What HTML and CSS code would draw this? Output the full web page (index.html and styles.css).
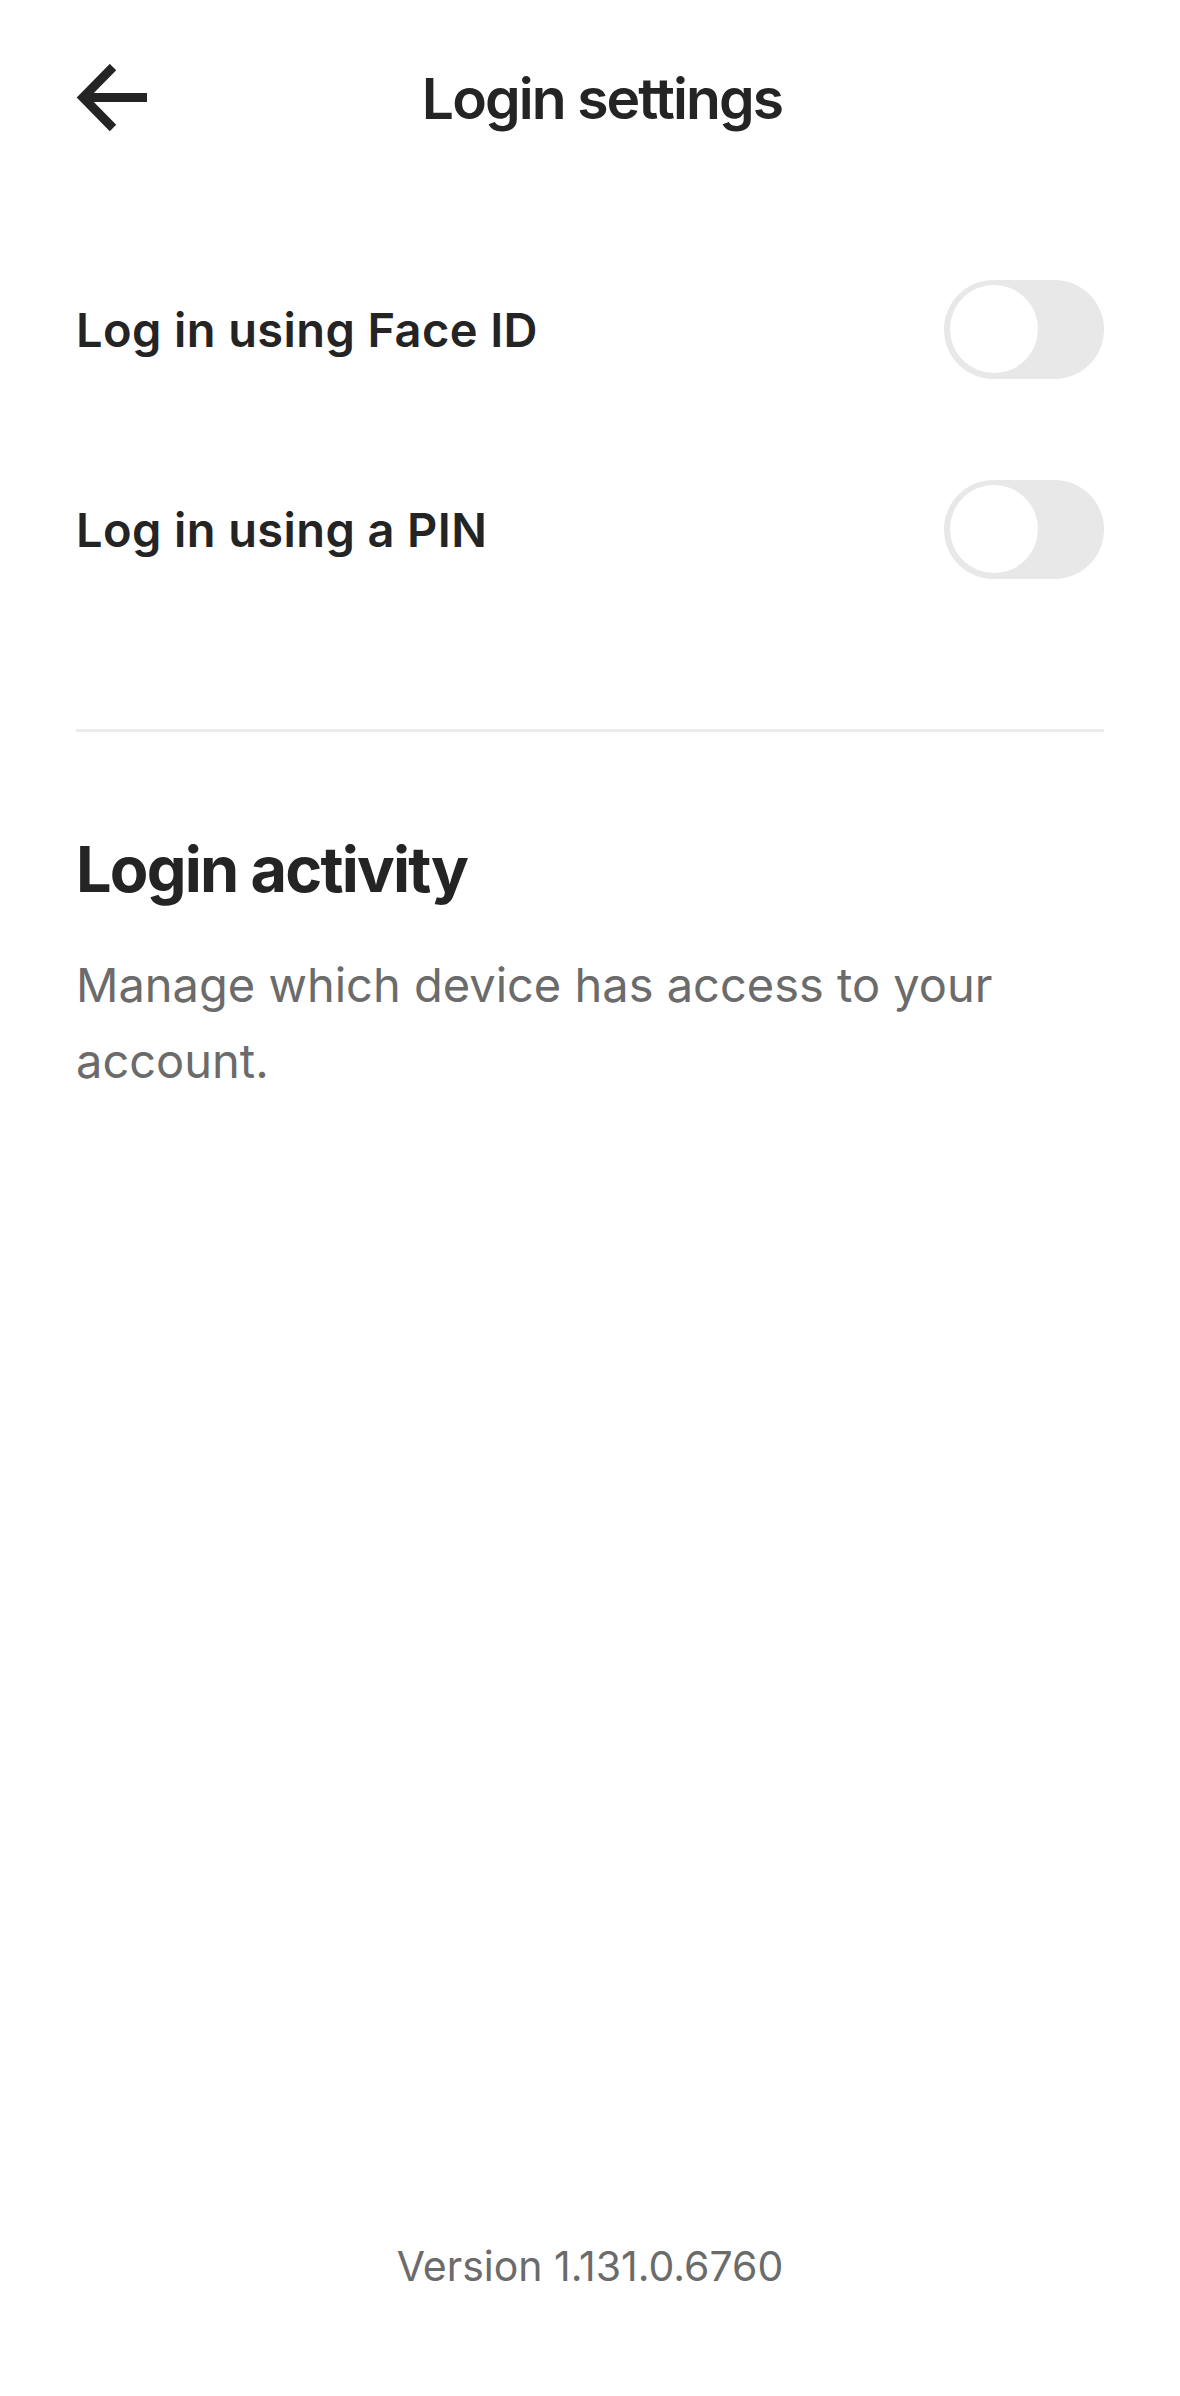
FILE: index.html
```html
<!DOCTYPE html>
<html lang="en">
<head>
<meta charset="utf-8">
<title>Login settings</title>
<link rel="stylesheet" href="styles.css">
</head>
<body>
<div class="page">
  <header class="header">
    <button class="back" aria-label="Back">
      <svg width="72" height="70" viewBox="0 0 72 70" fill="none" stroke="#242424" stroke-width="9" stroke-linejoin="miter" stroke-linecap="butt">
        <path d="M71 33.5H7"/>
        <path d="M37 3L7 33.5L37 64"/>
      </svg>
    </button>
    <h1 class="title">Login settings</h1>
    <span class="spacer"></span>
  </header>

  <section class="options">
    <div class="row">
      <span class="row-label">Log in using Face ID</span>
      <span class="toggle"><span class="knob"></span></span>
    </div>
    <div class="row">
      <span class="row-label">Log in using a PIN</span>
      <span class="toggle"><span class="knob"></span></span>
    </div>
  </section>

  <hr class="divider">

  <section class="activity">
    <h2 class="activity-title">Login activity</h2>
    <p class="activity-desc">Manage which device has access to your account.</p>
  </section>

  <footer class="version">Version 1.131.0.6760</footer>
</div>
</body>
</html>
```

FILE: styles.css
```css
* { box-sizing: border-box; }

html, body {
  margin: 0;
  padding: 0;
  background: #ffffff;
}

body {
  font-family: Inter, "Liberation Sans", Arial, sans-serif;
  color: #242424;
}

.page {
  min-height: 100vh;
  display: flex;
  flex-direction: column;
  padding: 0 76px;
}

.header {
  height: 198px;
  display: grid;
  grid-template-columns: 1fr auto 1fr;
  align-items: center;
}

.back {
  justify-self: start;
  display: flex;
  padding: 0;
  margin: 0;
  border: 0;
  background: none;
}

.title {
  margin: 0 0 0 24px;
  font-size: 57px;
  font-weight: 600;
  line-height: 70px;
  letter-spacing: -1.9px;
}

.options {
  padding-top: 31px;
  display: flex;
  flex-direction: column;
}

.row {
  height: 200px;
  display: flex;
  align-items: center;
  justify-content: space-between;
}

.row-label {
  font-size: 47px;
  font-weight: 600;
  letter-spacing: 0.4px;
}

.toggle {
  width: 160px;
  height: 99px;
  border-radius: 50px;
  background: #e8e8e8;
  display: flex;
  align-items: center;
  padding: 0 6px;
}

.knob {
  width: 88px;
  height: 88px;
  border-radius: 50%;
  background: #ffffff;
}

.divider {
  margin: 100px 0 0;
  border: 0;
  height: 3px;
  background: #ebebeb;
}

.activity {
  padding-top: 101px;
}

.activity-title {
  margin: 0;
  font-size: 63px;
  font-weight: 700;
  line-height: 72px;
  letter-spacing: -1.8px;
}

.activity-desc {
  margin: 42px 0 0;
  font-size: 47px;
  font-weight: 400;
  line-height: 76px;
  color: #6b6b6b;
}

.version {
  margin-top: auto;
  padding-bottom: 100px;
  text-align: center;
  font-size: 41px;
  line-height: 60px;
  color: #6b6b6b;
}
```
